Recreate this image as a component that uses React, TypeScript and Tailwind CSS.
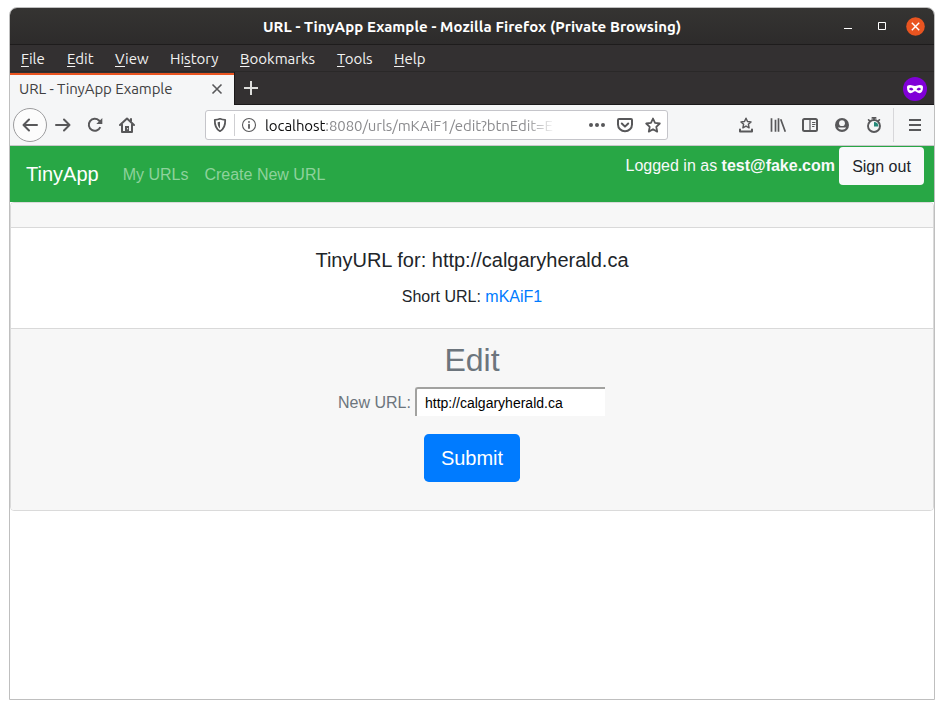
import React from "react";

const ui = "font-['Ubuntu','Noto_Sans',sans-serif]";

const menus = [
  { key: "F", pre: "", rest: "ile", cls: "w-[46px]" },
  { key: "E", pre: "", rest: "dit", cls: "w-[48px]" },
  { key: "V", pre: "", rest: "iew", cls: "w-[55px]" },
  { key: "s", pre: "Hi", rest: "tory", cls: "w-[70px]" },
  { key: "B", pre: "", rest: "ookmarks", cls: "w-[97px]" },
  { key: "T", pre: "", rest: "ools", cls: "w-[57px]" },
  { key: "H", pre: "", rest: "elp", cls: "w-[50px]" },
];

function Icon({ children, className = "" }: { children: React.ReactNode; className?: string }) {
  return (
    <svg
      viewBox="0 0 16 16"
      className={`block h-4 w-4 shrink-0 ${className}`}
      fill="none"
      stroke="#58585a"
      strokeWidth="2"
      strokeLinecap="round"
      strokeLinejoin="round"
    >
      {children}
    </svg>
  );
}

function TitleBar() {
  return (
    <div className="flex h-[37px] items-center border-b border-[#1e1c1c] bg-linear-to-b from-[#353432] to-[#2d2b2b]">
      <div className="w-[253px]" />
      <div className="w-[424px] pt-px text-[15px] leading-9 font-bold tracking-[0.08px] whitespace-nowrap text-white">
        URL - TinyApp Example - Mozilla Firefox (Private Browsing)
      </div>
      <div className="ml-auto flex items-center pr-[9px]">
        <svg viewBox="0 0 10 12" className="mr-6 block h-3 w-2.5">
          <path d="M1 8.5h8" stroke="#fff" />
        </svg>
        <svg viewBox="0 0 10 12" className="mr-[19px] block h-3 w-2.5" fill="none">
          <path d="M1.5 2.5h7v7h-7z" stroke="#fff" />
        </svg>
        <svg viewBox="0 0 19 19" className="block h-[19px] w-[19px]">
          <circle cx="9.5" cy="9.5" r="9.3" fill="#e95420" />
          <path d="M5.8 5.8l7.4 7.4M13.2 5.8l-7.4 7.4" stroke="#fff" strokeWidth="1.4" />
        </svg>
      </div>
    </div>
  );
}

function MenuBar() {
  return (
    <div className="flex h-[27px] items-center border-b border-[#2a2828] bg-[#333031] pt-px pl-[11px] text-[15px] leading-[26px] text-[#f2f2f2]">
      {menus.map((m) => (
        <div key={m.key} className={m.cls}>
          {m.pre}
          <span className="underline decoration-1 underline-offset-[2px] [text-decoration-skip-ink:none]">{m.key}</span>
          {m.rest}
        </div>
      ))}
    </div>
  );
}

function TabBar() {
  return (
    <div className="flex h-[33px] bg-[#333031]">
      <div className="mt-px flex h-8 w-[224px] items-center border-t-2 border-[#e95420] bg-[#f5f6f7] pl-[9px] text-[15px] text-[#3f3f42]">
        <span className="w-[154px] pb-0.5 tracking-[-0.07px] whitespace-nowrap">URL - TinyApp Example</span>
        <svg viewBox="0 0 12 12" className="mb-0.5 ml-[38px] block h-3 w-3">
          <path d="M1.500 1.500l9 9M10.500 1.500l-9 9" stroke="#58585a" strokeWidth="1.600" />
        </svg>
      </div>
      <div className="flex flex-1 items-center border-b border-l border-[#1b191a]">
        <svg viewBox="0 0 14 14" className="ml-[9px] block h-3.5 w-3.5">
          <path d="M7 0v14M0 7h14" stroke="#dededc" strokeWidth="2" />
        </svg>
        <svg viewBox="0 0 24 24" className="mt-0.5 mr-[7px] ml-auto block h-6 w-6">
          <circle cx="12" cy="12" r="12" fill="#8000d7" />
          <path
            fillRule="evenodd"
            fill="#fff"
            d="M4 10.300C4 8.700 5 8 7.200 8c2 0 3 .9 4.800 .9S14.800 8 16.800 8C19 8 20 8.700 20 10.300 20 14 18.800 16.200 16.300 16.200c-2 0-2.800-1.900-4.300-1.900s-2.300 1.900-4.300 1.900C5.200 16.200 4 14 4 10.300zM6 12.300c1.200 1.400 3.200 1.500 4.400 .1C9.500 10.400 7 10.200 6 12.300zM18 12.300c-1-2.100-3.500-1.900-4.400 .1 1.200 1.400 3.200 1.300 4.400-.1z"
          />
        </svg>
      </div>
    </div>
  );
}

function AddressBar() {
  return (
    <div className="ml-[70px] flex h-[30px] w-[463px] items-center rounded-[3px] border border-[#c5c5ca] bg-white">
      <Icon className="ml-1.5">
        <path d="M8 1.800c1.800 .8 3.600 1 5.200 1 .2 5.200-1.200 9.400-5.200 11.400C4 12.200 2.600 8 2.800 2.800c1.600 0 3.400-.2 5.200-1z" strokeWidth="1.800" />
        <path d="M8 4.800v6.600C6.200 10.200 5.600 7.800 5.600 5.300 6.500 5.300 7.300 5.100 8 4.800z" fill="#58585a" stroke="none" />
      </Icon>
      <div className="ml-1.5 h-[22px] w-px bg-[#cfcfd2]" />
      <Icon className="ml-1.5">
        <circle cx="8" cy="8" r="6.500" strokeWidth="1.100" />
        <path d="M8 7.700v3.300M8 4.900v.1" strokeWidth="1.800" />
      </Icon>
      <div className="ml-2 w-[300px] pt-px text-[15px] leading-7 tracking-[-0.08px] whitespace-nowrap text-[#8b8b8e] [mask-image:linear-gradient(to_right,#000_260px,transparent_291px)]">
        <span className="text-[#0c0c0d]">localhost</span>:8080/urls/mKAiF1/edit?btnEdit=E
      </div>
      <div className="ml-auto flex items-center gap-3 pr-1.5">
        <Icon>
          <g fill="#58585a" stroke="none">
            <circle cx="2" cy="8" r="2" />
            <circle cx="8" cy="8" r="2" />
            <circle cx="14" cy="8" r="2" />
          </g>
        </Icon>
        <Icon>
          <path d="M2 2h12a1 1 0 0 1 1 1v4.500a7 6.800 0 0 1-14 0V3a1 1 0 0 1 1-1z" />
          <path d="M4.800 6.500L8 9.600l3.200-3.100" />
        </Icon>
        <Icon>
          <path d="M8 1.500l2 4.400 4.800 .6-3.500 3.300 .9 4.800L8 12.200l-4.200 2.400 .9-4.800L1.200 6.500 6 5.900z" strokeWidth="1.800" />
        </Icon>
      </div>
    </div>
  );
}

function NavBar() {
  return (
    <div className="flex h-[41px] items-center border-b border-[#c8c8ca] bg-[#f5f6f7]">
      <div className="ml-[3px] flex h-[34px] w-[34px] items-center justify-center rounded-full border border-[#9c9c9e] bg-[#fcfcfc]">
        <Icon>
          <path d="M15 8H1.500M7 2.500L1.500 8 7 13.500" />
        </Icon>
      </div>
      <Icon className="ml-2">
        <path d="M1 8h13.500M9 2.500L14.500 8 9 13.500" />
      </Icon>
      <Icon className="ml-4">
        <path d="M13.300 10.200a6 6 0 1 1-1.300-6.700L14 5.500" strokeLinecap="butt" />
        <path d="M15.300 1v6H9.300z" fill="#58585a" stroke="none" />
      </Icon>
      <Icon className="ml-4">
        <path d="M1 8l7-6.500L15 8M3 7.500V15h10V7.500M12 2v2" />
        <path d="M6 15V9h4v6z" fill="#58585a" stroke="none" />
        <path d="M8.600 11.500v.4" stroke="#f5f6f7" strokeWidth="1" />
      </Icon>
      <AddressBar />
      <div className="ml-[70px] flex items-center gap-4">
        <Icon>
          <path d="M8 1.300l1.500 3.200 3.500 .4-2.600 2.400 .7 3.500L8 9.100l-3.100 1.700 .7-3.500L3 4.900l3.500-.4z" strokeWidth="1.500" />
          <path d="M2 12.500v2h12v-2" />
        </Icon>
        <Icon>
          <path d="M1.500 2v12M5.500 3.500V14M8.500 2v12M11 3l4 11" strokeLinecap="square" strokeWidth="1.700" />
        </Icon>
        <Icon>
          <rect x="1" y="2" width="14" height="12" rx="1.500" />
          <path d="M8 3v10.500M10.500 5.500h2.500M10.500 7.500h2.500M10.500 9.500h1.500" strokeWidth="1.200" />
        </Icon>
        <Icon>
          <circle cx="8" cy="8" r="7" fill="#58585a" stroke="none" />
          <circle cx="8" cy="6.200" r="2.900" fill="#f5f6f7" stroke="none" />
          <path d="M3.800 10.500h8.400c-1.900 3-6.500 3-8.400 0z" fill="#f5f6f7" stroke="none" />
        </Icon>
        <Icon>
          <circle cx="8" cy="9" r="6" strokeWidth="1.900" />
          <path d="M8 9.500V5A4.500 4.500 0 0 1 12.500 9.500z" fill="#248878" stroke="none" />
          <path d="M6.300 .9h3.400M8 1v2M2.600 2.800l.7 .7M13.400 2.800l-.7 .7" strokeWidth="1.700" />
        </Icon>
      </div>
      <div className="ml-[11px] h-[34px] w-px bg-[#d7d7da]" />
      <Icon className="ml-[13px]">
        <path d="M2 3h12M2 8h12M2 13h12" strokeLinecap="butt" />
      </Icon>
    </div>
  );
}

function AppHeader() {
  return (
    <nav className="flex h-14 items-start bg-[#28a745] px-4 leading-6 text-[#8ed29c]">
      <span className="mt-[13px] text-[20px] leading-[30px] text-white">TinyApp</span>
      <span className="mt-[17px] ml-6">My URLs</span>
      <span className="mt-[17px] ml-4">Create New URL</span>
      <div className="-mr-1.5 ml-auto flex pt-px text-[#f8f9fa]">
        <span className="mt-[7px] mr-1">
          Logged in as <b>test@fake.com</b>
        </span>
        <button className="h-[38px] w-[85px] rounded-[4px] bg-[#f8f9fa] pt-0.5 text-[#212529]">Sign out</button>
      </div>
    </nav>
  );
}

function EditCard() {
  return (
    <section className="rounded-[4px] border border-[#dadada] bg-white text-center text-[#212529]">
      <div className="h-[25px] rounded-t-[3px] border-b border-[#d9d9d9] bg-[#f7f7f7]" />
      <div className="h-[100px] pt-5">
        <h5 className="text-[20px] leading-6">TinyURL for: http://calgaryherald.ca</h5>
        <p className="mt-[13px] leading-6">
          Short URL: <a className="text-[#007bff]">mKAiF1</a>
        </p>
      </div>
      <div className="h-[182px] rounded-b-[3px] border-t border-[#d9d9d9] bg-[#f7f7f7] pt-3 text-[#6c757d]">
        <h2 className="text-[32px] leading-[38px]">Edit</h2>
        <div className="mt-2 flex items-start justify-center pr-[1px]">
          <span className="mt-1 mr-1">New URL:</span>
          <input
            className="h-[29px] w-[190px] rounded-tl-[3px] border-t-2 border-l-2 border-[#a2a2a0] bg-white px-2 text-[14px] text-black outline-none"
            defaultValue="http://calgaryherald.ca"
          />
        </div>
        <button className="mt-[18px] h-12 w-24 rounded-[4.800px] bg-[#007bff] text-[20px] text-white">Submit</button>
      </div>
    </section>
  );
}

export default function App() {
  return (
    <div className="h-[709px] w-[944px] overflow-hidden bg-white pt-[7px] pl-[9px]">
      <div className="flex h-[693px] w-[926px] flex-col overflow-hidden rounded-t-[8px] border border-[#bfbfbf] bg-white">
        <div className={ui}>
          <TitleBar />
          <MenuBar />
          <TabBar />
          <NavBar />
        </div>
        <main className="font-['Liberation_Sans',Arial,sans-serif] text-[16px]">
          <AppHeader />
          <EditCard />
        </main>
      </div>
    </div>
  );
}
